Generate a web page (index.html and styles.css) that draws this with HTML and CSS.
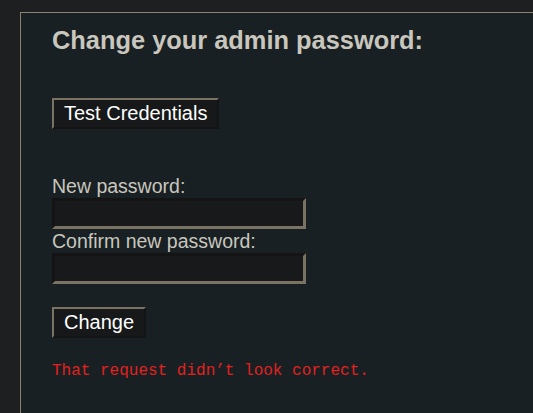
FILE: index.html
```html
<!DOCTYPE html>
<html>
<head>
<meta charset="utf-8">
<link rel="stylesheet" href="styles.css">
</head>
<body>
<div class="panel">
  <h1 class="title">Change your admin password:</h1>
  <button class="btn btn-test">Test Credentials</button>
  <form class="pw-form">
    <label class="lbl">New password:</label>
    <input class="field" type="password">
    <label class="lbl">Confirm new password:</label>
    <input class="field" type="password">
    <button class="btn btn-change" type="button">Change</button>
  </form>
  <p class="error">That request didn’t look correct.</p>
</div>
</body>
</html>
```
FILE: styles.css
```css
html, body {
  margin: 0;
  background: #1d1f20;
  height: 100%;
  overflow: hidden;
}
body {
  padding: 12px 0 0 20px;
  box-sizing: border-box;
  font-family: "Liberation Sans", Arial, sans-serif;
}
.panel {
  border: 1px solid #8b8272;
  border-right: none;
  border-bottom: none;
  background: #182023;
  padding: 13px 0 0 31px;
  height: 100%;
  box-sizing: border-box;
}
.title {
  margin: 0;
  font-size: 25.4px;
  font-weight: bold;
  color: #c9c6bd;
  line-height: 28px;
}
.btn {
  display: block;
  background: #171819;
  color: #ffffff;
  font-family: "Liberation Sans", Arial, sans-serif;
  font-size: 20px;
  line-height: 23px;
  padding: 2px 10px 2px 10px;
  border-style: solid;
  border-width: 2px;
  border-color: #7a7363 #141414 #141414 #7a7363;
}
.btn-test {
  margin-top: 44px;
}
.pw-form {
  margin-top: 45px;
  display: flex;
  flex-direction: column;
  align-items: flex-start;
}
.lbl {
  font-size: 19.5px;
  line-height: 24px;
  color: #c9c6bd;
}
.field {
  width: 248px;
  height: 25px;
  box-sizing: content-box;
  padding: 0;
  margin: 0;
  background: #18191b;
  border-style: solid;
  border-width: 3px;
  border-color: #141414 #7a7363 #7a7363 #141414;
}
.btn-change {
  margin-top: 23px;
}
.error {
  margin: 24px 0 0 0;
  font-family: "Liberation Mono", monospace;
  font-size: 16px;
  line-height: 18px;
  color: #e3211f;
}
```
